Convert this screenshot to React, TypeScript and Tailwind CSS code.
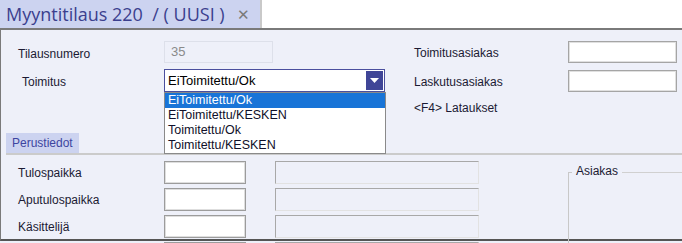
import React from "react";

const label = "text-[12px] text-[#1b1a33]";
const font = { fontFamily: '"Liberation Sans", Arial, sans-serif' };

function WhiteBox({ w }: { w: string }) {
  return (
    <div className={`${w} h-[23px] bg-white border border-[#9c9c9c] shadow-[inset_0_0_0_1px_#dedede]`} />
  );
}

function SunkenBox() {
  return (
    <div className="w-[204px] h-[23px] bg-[#eef0f9] border-l border-t border-[#a8a8a8] border-r border-b border-r-[#e2e2e2] border-b-[#e2e2e2]" />
  );
}

export default function App() {
  const items = ["EiToimitettu/Ok", "EiToimitettu/KESKEN", "Toimitettu/Ok", "Toimitettu/KESKEN"];
  return (
    <div className="w-[682px] h-[243px] overflow-hidden bg-[#eef0f9]" style={font}>
      {/* tab bar */}
      <div className="flex h-[30px] bg-[#ccd3f0] border-b-2 border-[#7a7a7a]">
        <div className="w-[260px] flex items-center pl-[6px] gap-[12px]">
          <span
            className="text-[18px] text-[#3b3f8e] whitespace-pre leading-none"
            style={{ fontFamily: '"Open Sans", "Noto Sans", sans-serif' }}
          >
            Myyntitilaus 220  / ( UUSI )
          </span>
          <span className="text-[15px] text-[#7a7a7a] leading-none">✕</span>
        </div>
        <div className="flex-1 bg-white border-l-2 border-[#c9c9c9]" />
      </div>

      {/* body */}
      <div className="relative h-[211px] border-l border-[#7a7a7a] border-b-2 border-b-[#555]">
        {/* header section */}
        <div className="flex pt-[11px]">
          <div className="w-[400px]">
            <div className="flex items-center h-[22px]">
              <span className={`${label} w-[163px] pl-[17px] translate-y-[2px]`}>Tilausnumero</span>
              <div className="w-[109px] h-[22px] border border-[#dde0ea] bg-[#eef0f9] flex items-center pl-[6px] text-[13px] text-[#8a8a8a]">
                35
              </div>
            </div>
            <div className="flex items-center h-[23px] mt-[6px]">
              <span className={`${label} w-[163px] pl-[21px] translate-y-[1px]`}>Toimitus</span>
              <div className="relative w-[221px] h-[23px] border border-[#4a4f9e] bg-white flex items-center">
                <span className="pl-[3px] text-[13px] text-black flex-1">EiToimitettu/Ok</span>
                <div className="w-[17px] h-[19px] mr-[1px] bg-[#3f4597] flex items-center justify-center">
                  <svg width="9" height="5" viewBox="0 0 9 5">
                    <path d="M0 0H9L4.5 5Z" fill="white" />
                  </svg>
                </div>
                <div className="absolute left-[-1px] top-[22px] w-[222px] bg-white border border-[#8a8a8a] z-10">
                  {items.map((t, i) => (
                    <div
                      key={t}
                      className={`h-[15px] flex items-center pl-[3px] text-[12.5px] leading-none ${
                        i === 0 ? "bg-[#1874d7] text-white" : "text-[#10102a]"
                      }`}
                    >
                      {t}
                    </div>
                  ))}
                </div>
              </div>
            </div>
          </div>
          <div className="flex-1 pl-[13px]">
            <div className="flex items-center h-[22px]">
              <span className={`${label} w-[154px] translate-y-[1px]`}>Toimitusasiakas</span>
              <div className="w-[109px] h-[22px] bg-white border border-[#a5a5a5] shadow-[inset_0_0_0_1px_#e0e0e0]" />
            </div>
            <div className="flex items-center h-[22px] mt-[7px]">
              <span className={`${label} w-[154px] translate-y-[1px]`}>Laskutusasiakas</span>
              <div className="w-[109px] h-[22px] bg-white border border-[#a5a5a5] shadow-[inset_0_0_0_1px_#e0e0e0]" />
            </div>
            <div className={`${label} mt-[7px]`}>&lt;F4&gt; Lataukset</div>
          </div>
        </div>

        {/* Perustiedot tab */}
        <div className="mt-[16px] flex items-end border-b-2 border-[#cbcbcb] ml-[5px]">
          <div className="h-[20px] px-[6px] bg-[#ccd3f0] text-[12px] text-[#3d45a0] flex items-center">
            Perustiedot
          </div>
        </div>

        {/* lower section */}
        <div className="flex pt-[6px]">
          <div className="w-[563px] flex flex-col gap-[4px]">
            {["Tulospaikka", "Aputulospaikka", "Käsittelijä", ""].map((t) => (
              <div key={t} className="flex items-center">
                <span className={`${label} w-[163px] pl-[17px]`}>{t}</span>
                <WhiteBox w="w-[82px]" />
                <div className="w-[29px]" />
                <SunkenBox />
              </div>
            ))}
          </div>
          <div className="flex-1 mt-[1px] ml-[4px]">
            <div className="flex items-center">
              <div className="w-[4px] h-[1px] bg-[#c8c8c8] self-center mt-[2px]" />
              <span className="px-[4px] text-[12px] text-[#1b1a33]">Asiakas</span>
              <div className="flex-1 h-[1px] bg-[#d0d0d0] mt-[2px]" />
            </div>
            <div className="w-[1px] h-[80px] bg-[#c8c8c8] -mt-[8px]" />
          </div>
        </div>
      </div>
    </div>
  );
}
